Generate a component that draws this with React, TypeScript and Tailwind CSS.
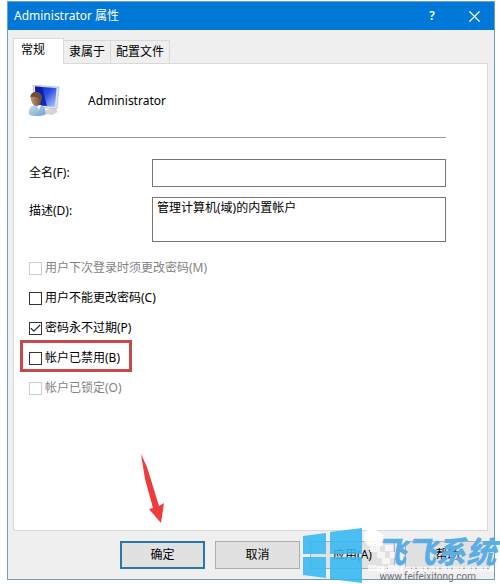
import React, { useState } from 'react';
import { Check, X } from 'lucide-react';

interface AccountOption {
  id: string;
  label: string;
  checked?: boolean;
  disabled?: boolean;
  highlighted?: boolean;
}

const TABS = ['常规', '隶属于', '配置文件'];

const OPTIONS: AccountOption[] = [
  { id: 'must-change', label: '用户下次登录时须更改密码(M)', disabled: true },
  { id: 'cannot-change', label: '用户不能更改密码(C)' },
  { id: 'never-expires', label: '密码永不过期(P)', checked: true },
  { id: 'account-disabled', label: '帐户已禁用(B)', highlighted: true },
  { id: 'account-locked', label: '帐户已锁定(O)', disabled: true },
];

const BUTTONS = ['确定', '取消', '应用(A)', '帮助'];

const UserIcon = () => (
  <svg viewBox="0 0 32 32" className="h-8 w-8 shrink-0" aria-hidden="true">
    <defs>
      <linearGradient id="screen" x1="0" y1="0" x2="1" y2="1">
        <stop offset="0" stopColor="#0a1cae" />
        <stop offset="0.45" stopColor="#2a4ee4" />
        <stop offset="1" stopColor="#b9d0fb" />
      </linearGradient>
      <linearGradient id="face" x1="0" y1="0" x2="1" y2="0">
        <stop offset="0" stopColor="#c39a74" />
        <stop offset="1" stopColor="#6c4a34" />
      </linearGradient>
      <linearGradient id="shirt" x1="0" y1="0" x2="1" y2="1">
        <stop offset="0" stopColor="#c5e2f6" />
        <stop offset="1" stopColor="#6f9fc8" />
      </linearGradient>
    </defs>
    <path d="M17 25l9-2 3 4-6 3-7-1z" fill="#d3d5d8" />
    <path d="M4 0l26 2-2 22-22-2z" fill="#dfe3ea" stroke="#a9afbb" strokeWidth="0.6" />
    <path d="M6 1.500l21.500 1.500-1.500 19-18.500-2z" fill="url(#screen)" />
    <path d="M6 1.500l7 .6 5 18.900-11-1z" fill="#0818a6" opacity="0.8" />
    <path d="M0 29c-.5-6 2-8 6-9l5 0c5 1 6 5 5.500 9.500-5 2-12 2-16.500 0z" fill="url(#shirt)" />
    <path d="M7 20l3 5 2-5z" fill="#f2f7fb" />
    <path d="M1.500 13c-1-8 11-8 11 0 0 5-2 8-5 8s-5-3-6-8z" fill="url(#face)" />
    <path d="M1.500 12c0-7 12-7 11.500 1.500l-1.500 4c0-3-1-4-3-5-2-.8-4-.8-7-.5z" fill="#6d4f3a" />
  </svg>
);

const OptionRow: React.FC<{ option: AccountOption }> = ({ option }) => {
  const [checked, setChecked] = useState(Boolean(option.checked));

  return (
    <div className="relative flex h-5 items-center gap-[3px] self-start">
      <input
        id={option.id}
        type="checkbox"
        checked={checked}
        disabled={option.disabled}
        onChange={(e) => setChecked(e.target.checked)}
        className="h-[13px] w-[13px] appearance-none border border-[#333333] bg-white disabled:border-[#cccccc]"
      />
      {checked && (
        <Check size={13} strokeWidth={2} className="pointer-events-none absolute left-0 text-[#222222]" />
      )}
      <label htmlFor={option.id} className={option.disabled ? 'text-[#838383]' : 'text-black'}>
        {option.label}
      </label>
      {option.highlighted && (
        <span className="pointer-events-none absolute -top-2 -right-3 -bottom-1 -left-[9px] border-[3px] border-[#c8484b]" />
      )}
    </div>
  );
};

const Watermark = () => (
  <div className="pointer-events-none absolute right-0 bottom-0 h-[60px] w-[200px]">
    <svg viewBox="0 0 200 60" className="h-[60px] w-[200px]" aria-hidden="true">
      <path d="M64 8l8-4 12 7-2 3 4 2-4 6h-14l-4-5z" fill="#fff" opacity="0.9" />
      <path
        d="M70 22h10v6h-10zM85 21h8v6h-8zM77 28h8v6h-8zM90 28h7v6h-7zM82 34h8v6h-8zM68 41h8v6h-8zM88 41h7v6h-7zM77 42h7v6h-7z"
        fill="#fff"
        opacity="0.7"
      />
      <path d="M76 45h118" stroke="#fff" strokeWidth="5" strokeDasharray="3 2 6 1" opacity="0.65" />
      <path
        d="M3 12l23-3v21h-23zM30 8l32-4v26h-32zM3 33h23v21l-23-3zM30 33h32v26l-32-4z"
        fill="#35b8f2"
        fillOpacity="0.88"
      />
    </svg>
    <span className="absolute top-2 right-1 font-['Noto_Sans_CJK_SC',sans-serif] text-[30px] leading-9 font-black text-[#5aaee5] italic">
      飞飞系统
    </span>
    <span className="absolute right-6 bottom-0 font-['Roboto',sans-serif] text-[10px] leading-[14px] text-[#6f7275]">
      www.feifeixitong.com
    </span>
  </div>
);

const App = () => {
  const [activeTab, setActiveTab] = useState(TABS[0]);
  const [fullName, setFullName] = useState('');
  const [description, setDescription] = useState('管理计算机(域)的内置帐户');

  return (
    <main className="relative bg-white pt-px pr-[5px] pb-1 pl-[7px] font-['Noto_Sans','Noto_Sans_CJK_SC',sans-serif] text-xs leading-5 text-black">
      <section className="border border-[#6c9fc2] bg-[#efefef]">
        <header className="flex h-7 items-center bg-[#0078d7] pl-[6px] text-white">
          <h1 className="flex-1">Administrator 属性</h1>
          <button type="button" className="w-11 text-xs font-semibold">?</button>
          <button type="button" aria-label="关闭" className="flex w-10 justify-center">
            <X size={19} strokeWidth={1.5} />
          </button>
        </header>

        <div className="flex flex-col pt-2 pb-[10px]">
          <div role="tablist" className="flex items-end px-[5px]">
            {TABS.map((tab) => (
              <button
                key={tab}
                type="button"
                role="tab"
                aria-selected={tab === activeTab}
                onClick={() => setActiveTab(tab)}
                className={
                  tab === activeTab
                    ? 'relative z-10 -mb-px h-[26px] border border-b-0 border-[#d9d9d9] bg-white pr-[18px] pb-1 pl-[7px]'
                    : 'h-[23px] border border-b-0 border-l-0 border-[#d9d9d9] px-[5px]'
                }
              >
                {tab}
              </button>
            ))}
          </div>

          <div className="relative mr-[6px] ml-[5px] flex h-[468px] flex-col border border-[#d9d9d9] bg-white pr-[41px] pl-[15px]">
            <div className="flex h-[74px] items-center gap-[27px] border-b border-[#999999]">
              <UserIcon />
              <span>Administrator</span>
            </div>

            <div className="mt-[21px] flex items-start">
              <label htmlFor="full-name" className="w-[123px] pt-1">全名(F):</label>
              <input
                id="full-name"
                type="text"
                value={fullName}
                onChange={(e) => setFullName(e.target.value)}
                className="h-7 min-w-0 flex-1 border border-[#777777] bg-white px-1 outline-none"
              />
            </div>

            <div className="mt-[10px] flex items-start">
              <label htmlFor="description" className="w-[123px] pt-1">描述(D):</label>
              <textarea
                id="description"
                value={description}
                onChange={(e) => setDescription(e.target.value)}
                className="h-[45px] min-w-0 flex-1 resize-none border border-[#777777] bg-white px-1 outline-none"
              />
            </div>

            <div className="mt-4 flex flex-col gap-[10px]">
              {OPTIONS.map((option) => (
                <OptionRow key={option.id} option={option} />
              ))}
            </div>

            {/* arrow pointing at the confirm button */}
            <svg viewBox="0 0 26 70" className="absolute bottom-[6px] left-[126px] h-[70px] w-[26px]" aria-hidden="true">
              <path d="M1 0l6 13 12 39 5-3-3 20-12-14 4-1-8-29z" fill="#ef3b3b" />
            </svg>
          </div>

          <div className="mt-[10px] flex justify-end gap-[10px] pr-1">
            {BUTTONS.map((label, i) => (
              <button
                key={label}
                type="button"
                className={
                  i === 0
                    ? 'h-7 w-[85px] border-2 border-[#2a76a8] bg-[#e1e1e1]'
                    : 'h-7 w-[85px] border border-[#adadad] bg-[#e1e1e1]'
                }
              >
                {label}
              </button>
            ))}
          </div>
        </div>
      </section>
      <Watermark />
    </main>
  );
};

export default App;
